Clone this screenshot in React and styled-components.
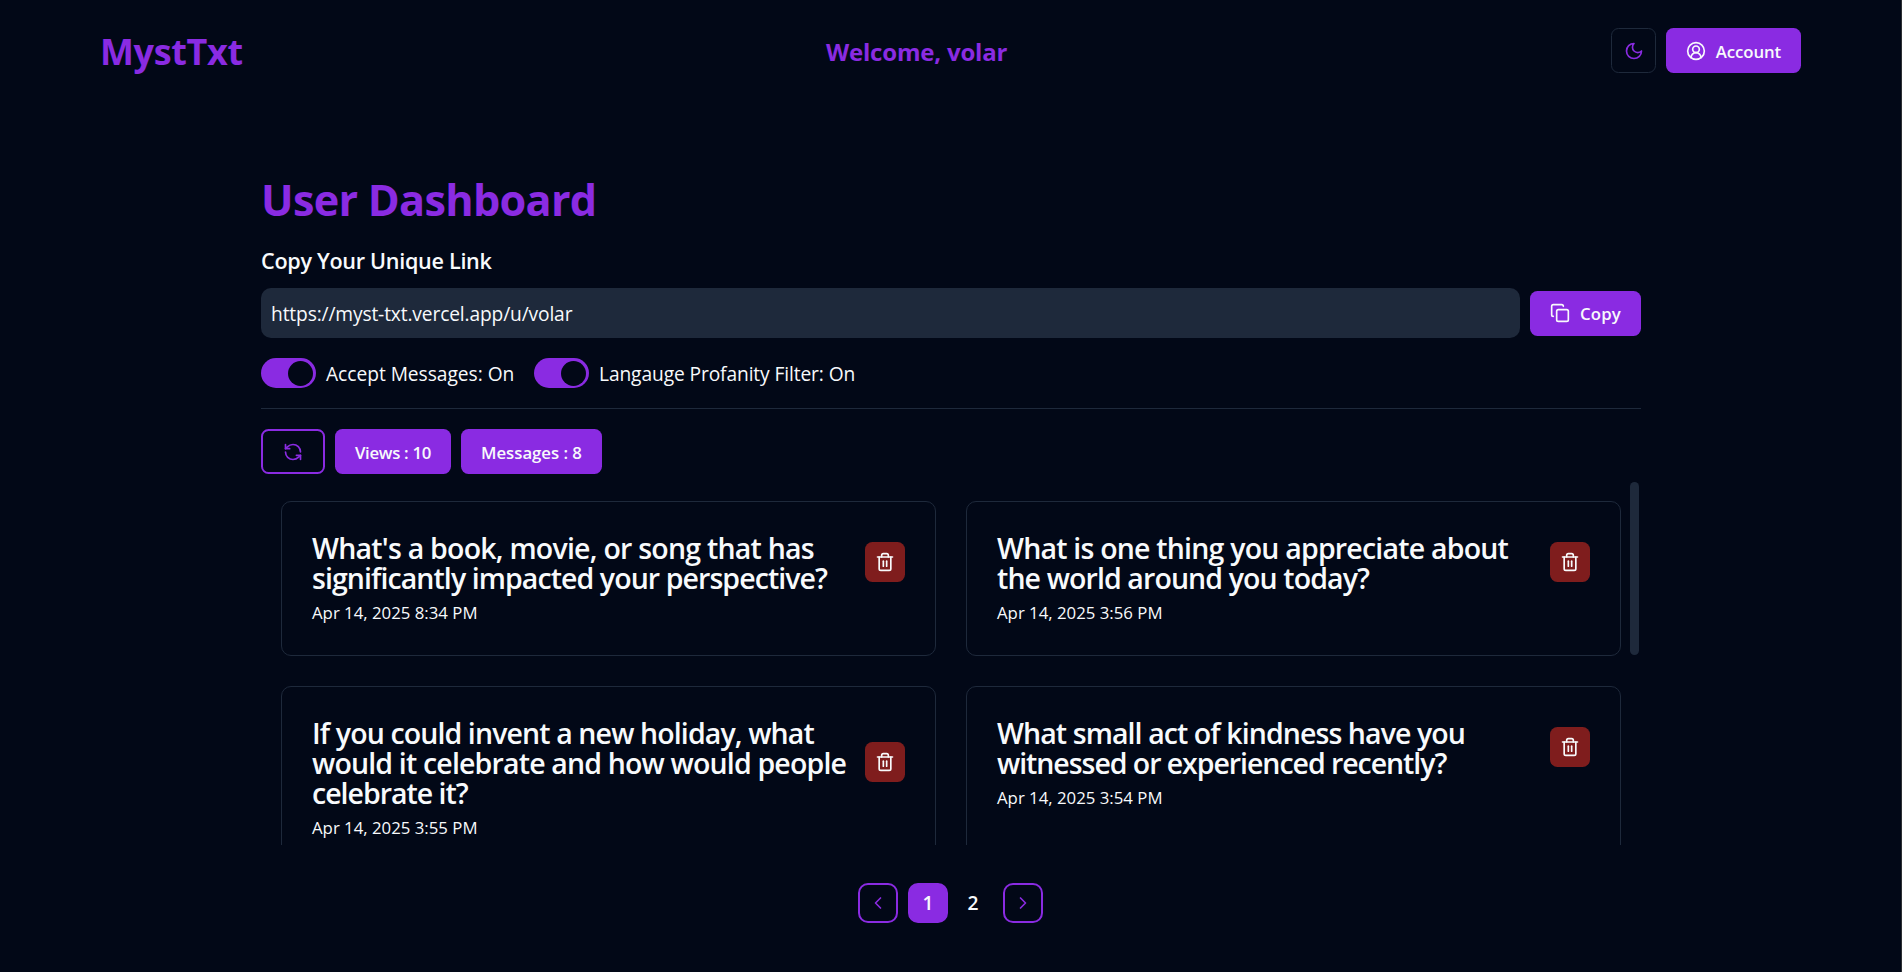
import React from 'react';
import styled, { createGlobalStyle } from 'styled-components';

const color = {
  bg: '#020817',
  primary: '#8a2be2',
  border: '#1e293b',
  text: '#f8fafc',
  danger: '#7f1d1d',
};

const GlobalStyle = createGlobalStyle`
  *, *::before, *::after { box-sizing: border-box; }
  body {
    margin: 0;
    background: ${color.bg};
    color: ${color.text};
    font-family: 'Open Sans', 'Noto Sans', sans-serif;
    overflow: hidden;
  }
  h1, h2, h3, p { margin: 0; }
  button { font-family: inherit; cursor: pointer; }
`;

const Page = styled.div`
  height: 972px;
  display: flex;
  flex-direction: column;
  overflow: hidden;
  border-right: 1px solid #2d2f33;
`;

const Header = styled.header`
  display: grid;
  grid-template-columns: 726px 1fr auto;
  align-items: center;
  height: 101px;
  padding: 0 100px 0 100px;
`;

const Logo = styled.div`
  padding-top: 2px;
  font-size: 36px;
  line-height: 45px;
  font-weight: 700;
  letter-spacing: -0.35px;
  color: ${color.primary};
`;

const Welcome = styled.div`
  padding-top: 2px;
  font-size: 24px;
  line-height: 35px;
  font-weight: 700;
  letter-spacing: -0.2px;
  color: ${color.primary};
`;

const Actions = styled.div`
  display: flex;
  gap: 10px;
`;

const Button = styled.button`
  display: inline-flex;
  flex: none;
  align-items: center;
  justify-content: center;
  gap: 10px;
  width: ${(p) => p.$width}px;
  height: 45px;
  padding: 0;
  border: 0;
  border-radius: 7.5px;
  background: ${color.primary};
  color: ${color.text};
  font-size: 16.8px;
  line-height: 25px;
  font-weight: 600;
  letter-spacing: ${(p) => p.$track || 0}px;
  white-space: nowrap;
`;

const ButtonLabel = styled.span`
  padding-top: 1px;
`;

const ThemeButton = styled(Button)`
  border: 1px solid ${color.border};
  background: transparent;
  color: ${color.primary};
`;

const RefreshButton = styled(Button)`
  border: 2px solid ${color.primary};
  background: transparent;
  color: ${color.primary};
`;

const Svg = styled.svg`
  display: block;
  flex: none;
  width: 20px;
  height: 20px;
  fill: none;
  stroke: currentColor;
  stroke-width: 2;
  stroke-linecap: round;
  stroke-linejoin: round;
`;

const Main = styled.main`
  width: 1380px;
  margin: 72px auto 0 261px;
  display: flex;
  flex-direction: column;
`;

const Title = styled.h1`
  padding-top: 2px;
  font-size: 43.2px;
  line-height: 50px;
  font-weight: 700;
  letter-spacing: -0.72px;
  color: ${color.primary};
`;

const Subtitle = styled.h2`
  margin-top: 18px;
  font-size: 21.6px;
  line-height: 35px;
  font-weight: 580;
  letter-spacing: -0.3px;
`;

const LinkRow = styled.div`
  display: flex;
  align-items: center;
  gap: 10px;
  margin-top: 10px;
`;

const LinkBox = styled.div`
  flex: 1;
  height: 50px;
  padding: 11px 10px 9px;
  border-radius: 10px;
  background: ${color.border};
  font-size: 19.2px;
  line-height: 30px;
  letter-spacing: -0.14px;
`;

const Toggles = styled.div`
  display: flex;
  align-items: center;
  gap: 20px;
  margin-top: 20px;
`;

const Toggle = styled.label`
  display: flex;
  align-items: center;
  gap: 10px;
  height: 30px;
`;

const Track = styled.span`
  display: flex;
  justify-content: flex-end;
  width: 55px;
  height: 30px;
  padding: 2.5px;
  border-radius: 15px;
  background: ${color.primary};
`;

const Thumb = styled.span`
  width: 25px;
  height: 25px;
  margin-right: 0.5px;
  border-radius: 50%;
  background: ${color.bg};
`;

const ToggleText = styled.span`
  width: ${(p) => p.$width}px;
  padding-top: 2px;
  font-size: 19.2px;
  line-height: 28px;
  letter-spacing: ${(p) => p.$track || 0}px;
  white-space: nowrap;
`;

const Divider = styled.div`
  height: 1px;
  margin-top: 20px;
  background: ${color.border};
`;

const Stats = styled.div`
  display: flex;
  gap: 10px;
  margin-top: 20px;
`;

const Viewport = styled.section`
  display: flex;
  height: 363px;
  margin-top: 8px;
  overflow: hidden;
`;

const Grid = styled.div`
  display: grid;
  grid-template-columns: 655px 655px;
  grid-auto-rows: max-content;
  gap: 30px;
  padding: 19px 9px 0 20px;
`;

const ScrollThumb = styled.div`
  flex: none;
  width: 9px;
  height: 173px;
  border-radius: 5px;
  background: ${color.border};
`;

const Card = styled.article`
  padding: 30px 30px 30px;
  border: 1px solid ${color.border};
  border-radius: 10px;
`;

const CardHead = styled.div`
  display: flex;
  align-items: center;
  justify-content: space-between;
`;

const CardTitle = styled.h3`
  padding-top: 1px;
  margin-bottom: -1px;
  font-size: 28.5px;
  line-height: 30px;
  font-weight: 600;
  font-stretch: 95%;
`;

const TitleLine = styled.span`
  display: block;
  letter-spacing: ${(p) => p.$track}px;
  white-space: nowrap;
`;

const CardDate = styled.p`
  margin-top: 8px;
  font-size: 16.8px;
  line-height: 25px;
`;

const DeleteButton = styled.button`
  display: flex;
  flex: none;
  align-items: center;
  justify-content: center;
  width: 40px;
  height: 40px;
  padding: 0;
  border: 0;
  border-radius: 7.5px;
  background: ${color.danger};
  color: ${color.text};
`;

const Pagination = styled.nav`
  display: flex;
  gap: 10px;
  margin: 38px 0 0 597px;
`;

const PageButton = styled.button`
  display: flex;
  align-items: center;
  justify-content: center;
  width: 40px;
  height: 40px;
  padding: 0;
  border: 2px solid ${color.primary};
  border-radius: 10px;
  background: ${(p) => (p.$active ? color.primary : 'transparent')};
  color: ${(p) => (p.$active ? color.text : color.primary)};
  font-size: 19.2px;
  line-height: 30px;
  font-weight: 600;
`;

const PageLink = styled(PageButton)`
  width: 35px;
  padding-right: 5px;
  border-color: transparent;
  color: ${color.text};
`;

const MoonIcon = () => (
  <Svg viewBox="0 0 24 24"><path d="M12 3a6 6 0 0 0 9 9 9 9 0 1 1-9-9Z" /></Svg>
);
const UserIcon = () => (
  <Svg viewBox="0 0 24 24">
    <path d="M18 20a6 6 0 0 0-12 0" /><circle cx="12" cy="10" r="4" /><circle cx="12" cy="12" r="10" />
  </Svg>
);
const CopyIcon = () => (
  <Svg viewBox="0 0 24 24">
    <rect width="14" height="14" x="8" y="8" rx="2" ry="2" />
    <path d="M4 16c-1.1 0-2-.9-2-2V4c0-1.1.9-2 2-2h10c1.1 0 2 .9 2 2" />
  </Svg>
);
const RefreshIcon = () => (
  <Svg viewBox="0 0 24 24">
    <path d="M21 12a9 9 0 0 0-9-9 9.75 9.75 0 0 0-6.74 2.74L3 8" /><path d="M3 3v5h5" />
    <path d="M3 12a9 9 0 0 0 9 9 9.75 9.75 0 0 0 6.74-2.74L21 16" /><path d="M16 16h5v5" />
  </Svg>
);
const TrashIcon = () => (
  <Svg viewBox="0 0 24 24">
    <path d="M3 6h18" /><path d="M19 6v14c0 1-1 2-2 2H7c-1 0-2-1-2-2V6" />
    <path d="M8 6V4c0-1 1-2 2-2h4c1 0 2 1 2 2v2" /><path d="M10 11v6" /><path d="M14 11v6" />
  </Svg>
);
const ChevronIcon = ({ right }) => (
  <Svg viewBox="0 0 24 24"><path d={right ? 'm9 18 6-6-6-6' : 'm15 18-6-6 6-6'} /></Svg>
);

const messages = [
  { lines: [["What's a book, movie, or song that has", -0.77], ['significantly impacted your perspective?', -0.92]], date: 'Apr 14, 2025 8:34 PM' },
  { lines: [['What is one thing you appreciate about', -0.79], ['the world around you today?', -0.89]], date: 'Apr 14, 2025 3:56 PM' },
  { lines: [['If you could invent a new holiday, what', -0.88], ['would it celebrate and how would people', -0.83], ['celebrate it?', -1]], date: 'Apr 14, 2025 3:55 PM' },
  { lines: [['What small act of kindness have you', -0.91], ['witnessed or experienced recently?', -1.05]], date: 'Apr 14, 2025 3:54 PM' },
];

export default function App() {
  return (
    <Page>
      <GlobalStyle />
      <Header>
        <Logo>MystTxt</Logo>
        <Welcome>Welcome, volar</Welcome>
        <Actions>
          <ThemeButton $width={45} aria-label="Toggle theme"><MoonIcon /></ThemeButton>
          <Button $width={135} $track={-0.1}><UserIcon /><ButtonLabel>Account</ButtonLabel></Button>
        </Actions>
      </Header>
      <Main>
        <Title>User Dashboard</Title>
        <Subtitle>Copy Your Unique Link</Subtitle>
        <LinkRow>
          <LinkBox>https://myst-txt.vercel.app/u/volar</LinkBox>
          <Button $width={111} $track={0.2}><CopyIcon /><ButtonLabel>Copy</ButtonLabel></Button>
        </LinkRow>
        <Toggles>
          <Toggle>
            <Track><Thumb /></Track>
            <ToggleText $width={188} $track={-0.03}>Accept Messages: On</ToggleText>
          </Toggle>
          <Toggle>
            <Track><Thumb /></Track>
            <ToggleText $width={258} $track={-0.11}>Langauge Profanity Filter: On</ToggleText>
          </Toggle>
        </Toggles>
        <Divider />
        <Stats>
          <RefreshButton $width={64} aria-label="Refresh"><RefreshIcon /></RefreshButton>
          <Button $width={116} $track={-0.3}><ButtonLabel>Views : 10</ButtonLabel></Button>
          <Button $width={141} $track={-0.03}><ButtonLabel>Messages : 8</ButtonLabel></Button>
        </Stats>
        <Viewport>
          <Grid>
            {messages.map((m) => (
              <Card key={m.date}>
                <CardHead>
                  <CardTitle>
                    {m.lines.map(([line, track]) => <TitleLine key={line} $track={track}>{line}</TitleLine>)}
                  </CardTitle>
                  <DeleteButton aria-label="Delete"><TrashIcon /></DeleteButton>
                </CardHead>
                <CardDate>{m.date}</CardDate>
              </Card>
            ))}
          </Grid>
          <ScrollThumb />
        </Viewport>
        <Pagination>
          <PageButton aria-label="Previous"><ChevronIcon /></PageButton>
          <PageButton $active>1</PageButton>
          <PageLink>2</PageLink>
          <PageButton aria-label="Next"><ChevronIcon right /></PageButton>
        </Pagination>
      </Main>
    </Page>
  );
}
